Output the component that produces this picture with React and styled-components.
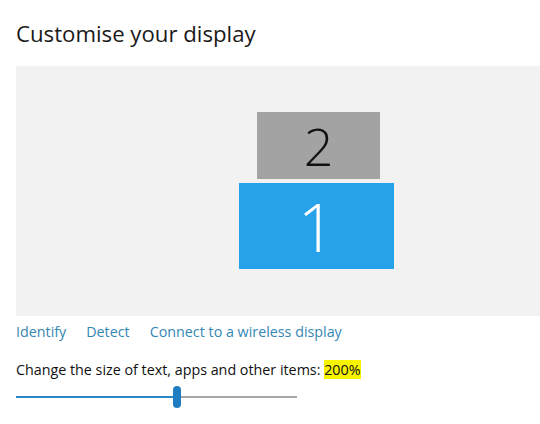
import React from "react";
import styled, { createGlobalStyle } from "styled-components";

const Global = createGlobalStyle`
  html, body { margin: 0; padding: 0; background: #ffffff; }
  body { font-family: "Open Sans", "Noto Sans", sans-serif; color: #111; }
`;

const Page = styled.div`
  width: 540px;
  height: 424px;
  padding: 19px 0 0 16px;
  box-sizing: border-box;
  overflow: hidden;
  display: flex;
  flex-direction: column;
`;

const Title = styled.h1`
  margin: 0;
  font-size: 22.2px;
  font-weight: 400;
  line-height: 30px;
  color: #1a1a1a;
`;

const Arrangement = styled.div`
  position: relative;
  margin-top: 17px;
  width: 524px;
  height: 250px;
  flex: none;
  background: #f2f2f2;
`;

const Monitor = styled.div`
  position: absolute;
  display: flex;
  align-items: center;
  justify-content: center;
  box-sizing: border-box;
  background: ${(p) => (p.$primary ? "#25a2ea" : "#a3a3a3")};
  color: ${(p) => (p.$primary ? "#ffffff" : "#111111")};
  font-weight: 300;
  font-size: ${(p) => p.$size}px;
  line-height: 1;
`;

const Links = styled.div`
  display: flex;
  gap: 20px;
  margin-top: 2px;
  height: 26px;
  align-items: center;
`;

const Link = styled.a`
  font-size: 14.3px;
  color: #3487b3;
  text-decoration: none;
  cursor: pointer;
`;

const Label = styled.div`
  margin-top: 15px;
  font-size: 14.3px;
  line-height: 22px;
  color: #111;
`;

const Mark = styled.span`
  background: #f8f400;
`;

const Slider = styled.div`
  display: flex;
  align-items: center;
  margin-top: 5px;
  width: 281px;
  height: 22px;
`;

const Fill = styled.div`
  flex: none;
  height: 2px;
  background: #2a86c7;
`;

const Thumb = styled.div`
  flex: none;
  width: 8px;
  height: 22px;
  border-radius: 4px;
  background: #1f7dc2;
`;

const Rest = styled.div`
  flex: 1;
  height: 2px;
  background: #a6a6a6;
`;

export default function App() {
  const pct = 157;
  return (
    <>
      <Global />
      <Page>
        <Title>Customise your display</Title>
        <Arrangement>
          <Monitor $size={52} style={{ left: 241, top: 46, width: 123, height: 67 }}>2</Monitor>
          <Monitor $primary $size={66} style={{ left: 223, top: 117, width: 155, height: 86 }}>1</Monitor>
        </Arrangement>
        <Links>
          <Link>Identify</Link>
          <Link>Detect</Link>
          <Link>Connect to a wireless display</Link>
        </Links>
        <Label>
          Change the size of text, apps and other items: <Mark>200%</Mark>
        </Label>
        <Slider>
          <Fill style={{ width: pct }} />
          <Thumb />
          <Rest />
        </Slider>
      </Page>
    </>
  );
}
